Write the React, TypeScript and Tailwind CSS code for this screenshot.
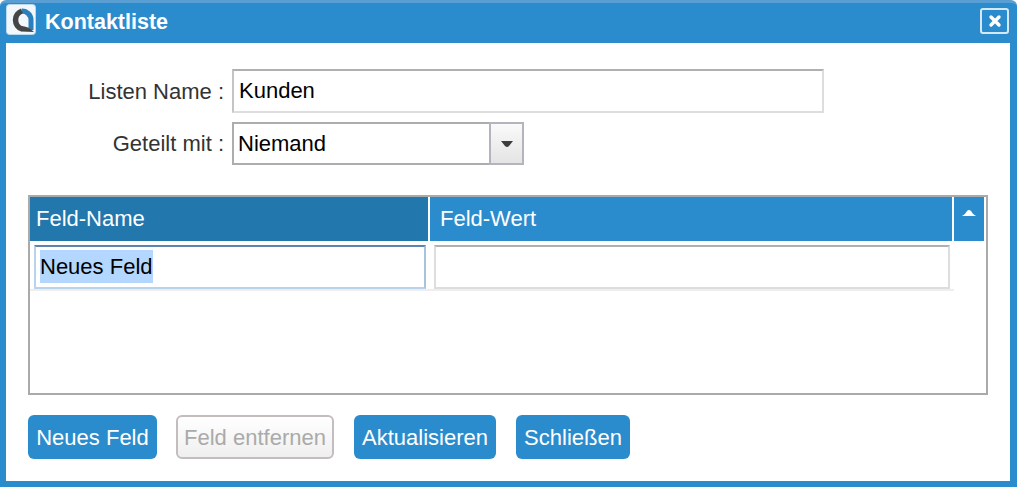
export default function App() {
  const btn = "h-[44px] rounded-[6px] bg-[#2b8ccd] pt-px text-[22px] leading-[43px] text-white";
  return (
    <div className="h-[487px] w-[1017px] overflow-hidden bg-white font-['Liberation_Sans',Arial,sans-serif] text-[#222]">
      <div className="flex h-[487px] flex-col rounded-t-[6px] border-t-[3px] border-t-[#5a9fd4] bg-[#2b8ccd] pr-[7px] pb-[6px] pl-[6px]">
        <div className="flex h-[40px] shrink-0 items-center justify-between pb-[2px]">
          <div className="flex items-center gap-[9px]">
            <svg width="30" height="31" viewBox="0 0 30 31" className="-mt-[5px]">
              <rect x="0.5" y="0.5" width="29" height="30" rx="3" fill="#f2f7fb" stroke="#b9d8ec" />
              <path d="M16 7 A9 9 0 0 1 25 16 L25 26" fill="none" stroke="#2b7fbd" strokeWidth="5" />
              <path d="M16 7 A9.5 9.5 0 0 0 16 25" fill="none" stroke="#454545" strokeWidth="5.5" />
              <path d="M15 22 C20 22 24 24 28 28 L15 27.5 Z" fill="#454545" />
            </svg>
            <span className="text-[21.5px] font-bold text-white">Kontaktliste</span>
          </div>
          <div className="mt-[-2px] mr-[1px] flex h-[26px] w-[29px] items-center justify-center rounded-[3px] border-2 border-[#d5e8f5]">
            <svg width="14" height="14" viewBox="0 0 14 14">
              <path d="M3 3 L11 11 M11 3 L3 11" stroke="white" strokeWidth="3.4" strokeLinecap="round" />
            </svg>
          </div>
        </div>
        <div className="flex min-h-0 flex-1 flex-col bg-white pt-[26px] pr-[22px] pl-[22px]">
          <div className="flex items-center">
            <label className="w-[204px] pr-[8px] text-right text-[22px] text-[#333]">Listen Name :</label>
            <div className="flex h-[44px] w-[592px] items-center border-2 border-[#dddddd] border-t-[#b0b0b0] border-l-[#c4c4c4] pb-[2px] pl-[5px] text-[22px] text-black">Kunden</div>
          </div>
          <div className="mt-[9px] flex items-center">
            <label className="w-[204px] pr-[8px] text-right text-[22px] text-[#333]">Geteilt mit :</label>
            <div className="flex h-[43px] w-[292px]">
              <div className="flex flex-1 items-center border-2 border-r-0 border-[#adadad] pl-[4px] text-[22px] text-black">Niemand</div>
              <div className="flex w-[35px] items-center justify-center border-2 border-[#b4b4bc] bg-gradient-to-b from-[#fafafa] to-[#e4e4e4]">
                <svg width="14" height="8" viewBox="0 0 14 8"><path d="M1 1 H13 L9 6 Q7 8 5 6 Z" fill="#3d3d3d" /></svg>
              </div>
            </div>
          </div>
          <div className="mt-[30px] h-[200px] border-2 border-[#aaaaaa]">
            <div className="flex h-[44px] gap-[2px] text-[22px] text-white">
              <div className="flex w-[398px] items-center bg-[#2277ad] pb-[2px] pl-[6px]">Feld-Name</div>
              <div className="flex w-[522px] items-center bg-[#2b8ccd] pb-[2px] pl-[10px]">Feld-Wert</div>
              <div className="flex w-[30px] items-start justify-center bg-[#2b8ccd] pt-[12px]">
                <svg width="16" height="8" viewBox="0 0 16 8"><path d="M1 7 Q4 6 6 2 Q8 0 10 2 Q12 6 15 7 Z" fill="white" /></svg>
              </div>
            </div>
            <div className="flex h-[50px] w-[924px] gap-[8px] border-b-2 border-[#eeeeee] pt-[4px] pl-[4px]">
              <div className="flex h-[44px] w-[392px] items-center border-2 border-[#b9d3ec] border-t-[#5f83b0] border-r-[#a9c3da] pb-[2px] pl-[4px] text-[22px] text-black">
                <span className="bg-[#b3d7fe]">Neues Feld</span>
              </div>
              <div className="h-[44px] w-[516px] border-2 border-[#dddddd] border-t-[#b0b0b0]" />
            </div>
          </div>
          <div className="mt-[20px] flex gap-[19px]">
            <button className={`${btn} w-[129px]`}>Neues Feld</button>
            <button className="h-[44px] w-[158px] rounded-[6px] border-2 border-[#c4bdbd] bg-gradient-to-b from-white to-[#efefef] pt-px text-[22px] leading-[39px] text-[#aaaaaa]">Feld entfernen</button>
            <button className={`${btn} ml-px w-[142px]`}>Aktualisieren</button>
            <button className={`${btn} ml-px w-[114px]`}>Schließen</button>
          </div>
        </div>
      </div>
    </div>
  );
}
